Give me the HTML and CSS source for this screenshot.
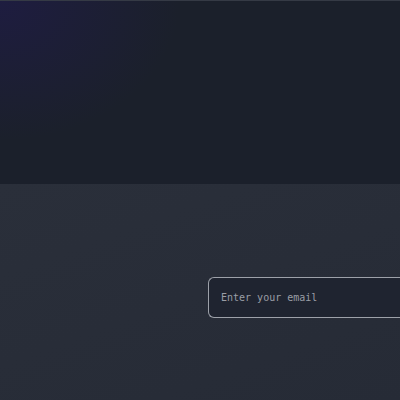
FILE: index.html
```html
<!DOCTYPE html>
<html lang="en">
<head>
  <meta charset="UTF-8">
  <meta name="viewport" content="width=device-width, initial-scale=1.0">
  <title>Subscribe</title>
  <link rel="stylesheet" href="styles.css">
</head>
<body>
  <div id="hero"></div>
  <div id="subscribe">
    <form class="sub-form">
      <input type="email" class="sub-input" placeholder="Enter your email">
    </form>
  </div>
</body>
</html>
```

FILE: styles.css
```css
html, body {
  margin: 0;
  width: 400px;
  height: 400px;
  overflow: hidden;
  background-color: #282d38;
}
/* 顶部 */
div#hero {
  height: 183px;
  border-top: 1px solid #353a45;
  background-color: #1b202b;
  background-image: radial-gradient(ellipse 180px 140px at 0 0, rgba(32, 26, 78, 0.6), rgba(27, 32, 43, 0) 100%);
}
/* 订阅区 */
div#subscribe {
  height: 216px;
  padding-top: 93px;
  padding-left: 208px;
  box-sizing: border-box;
  overflow: hidden;
  background-image: linear-gradient(160deg, #2a2f3a, #262b36);
}
form.sub-form {
  margin: 0;
  width: 192px;
}
input.sub-input {
  display: block;
  width: 200px;
  height: 41px;
  box-sizing: border-box;
  padding: 0 12px;
  border: 1px solid #9da1a9;
  border-right: none;
  border-radius: 6px 0 0 6px;
  outline: none;
  background-color: #1f2430;
  font-family: "DejaVu Sans Mono", monospace;
  font-size: 10px;
  color: #d0d3d8;
}
input.sub-input::placeholder {
  color: #9a9ea6;
}
```
